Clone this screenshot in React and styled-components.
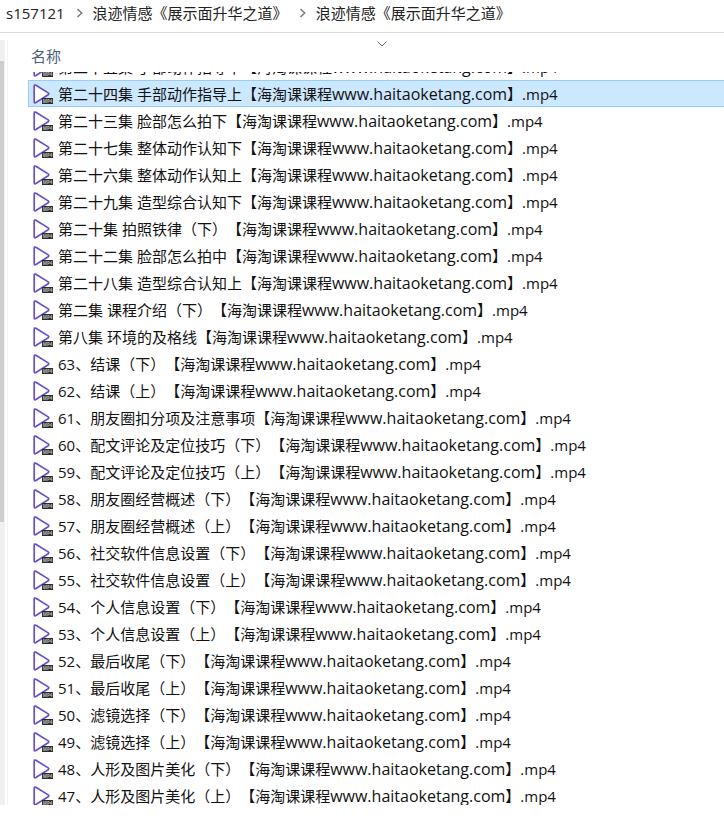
import React, { useState } from 'react'
import styled, { createGlobalStyle } from 'styled-components'

const PATH = ['s157121', '浪迹情感《展示面升华之道》', '浪迹情感《展示面升华之道》']

const FILES = [
  '第二十五集 手部动作指导下',
  '第二十四集 手部动作指导上',
  '第二十三集 脸部怎么拍下',
  '第二十七集 整体动作认知下',
  '第二十六集 整体动作认知上',
  '第二十九集 造型综合认知下',
  '第二十集 拍照铁律（下）',
  '第二十二集 脸部怎么拍中',
  '第二十八集 造型综合认知上',
  '第二集 课程介绍（下）',
  '第八集 环境的及格线',
  '63、结课（下）',
  '62、结课（上）',
  '61、朋友圈扣分项及注意事项',
  '60、配文评论及定位技巧（下）',
  '59、配文评论及定位技巧（上）',
  '58、朋友圈经营概述（下）',
  '57、朋友圈经营概述（上）',
  '56、社交软件信息设置（下）',
  '55、社交软件信息设置（上）',
  '54、个人信息设置（下）',
  '53、个人信息设置（上）',
  '52、最后收尾（下）',
  '51、最后收尾（上）',
  '50、滤镜选择（下）',
  '49、滤镜选择（上）',
  '48、人形及图片美化（下）',
  '47、人形及图片美化（上）'
]

const VideoIcon = () => (
  <FileIcon viewBox='0 0 20 20' aria-hidden='true'>
    <path
      d='M1.2 2.2 Q1.2 .4 2.9 1.3 L15.2 8.9 Q16.4 9.8 15.2 10.7 L2.9 18.5 Q1.2 19.4 1.2 17.6 Z'
      fill='#fff'
      stroke='#6a4fc8'
      strokeWidth='1.7'
      strokeLinejoin='round'
    />
    <rect x='9' y='14' width='11' height='6' fill='#2b2b2b' />
    <text x='14.5' y='18.6' textAnchor='middle' fontSize='4.5' fontWeight='700' fill='#bbb'>MP4</text>
  </FileIcon>
)

const Crumb = ({ label, first }) => (
  <CrumbItem>
    {!first &&
      <Separator viewBox='0 0 8 10' aria-hidden='true'>
        <path d='M1.5 1 L5.7 5 L1.5 9' fill='none' stroke='#777' strokeWidth='1.4' />
      </Separator>
    }
    <CrumbLink href='#'>{label}</CrumbLink>
  </CrumbItem>
)

export default function App () {
  const [selected, setSelected] = useState(1)
  return (
    <Window>
      <GlobalStyle />
      <Breadcrumbs aria-label='路径'>
        {PATH.map((label, i) => <Crumb key={i} label={label} first={i === 0} />)}
      </Breadcrumbs>
      <Body>
        <Track><Thumb /></Track>
        <Pane>
          <ColumnHeader type='button'>
            <SortArrow viewBox='0 0 10 6' aria-hidden='true'>
              <path d='M.5 .6 L5 5 L9.5 .6' fill='none' stroke='#666' />
            </SortArrow>
            <span>名称</span>
          </ColumnHeader>
          <Viewport>
            <FileList>
              {FILES.map((name, i) => (
                <li key={name}>
                  <FileRow type='button' $selected={i === selected} aria-pressed={i === selected} onClick={() => setSelected(i)}>
                    <VideoIcon />
                    <span>{name}【海淘课课程<Domain>www.haitaoketang.com</Domain>】.mp4</span>
                  </FileRow>
                </li>
              ))}
            </FileList>
          </Viewport>
        </Pane>
      </Body>
    </Window>
  )
}

const GlobalStyle = createGlobalStyle`
  * {
    box-sizing: border-box;
  }
  body {
    margin: 0;
    background: #fff;
    color: #111;
    font: 15px/20px "Open Sans", "Noto Sans CJK SC", sans-serif;
    text-spacing-trim: space-all;
  }
  button {
    border: 0;
    padding: 0;
    background: none;
    font: inherit;
    text-spacing-trim: inherit;
    text-align: left;
  }
`

const Window = styled.div`
  display: flex;
  flex-direction: column;
  height: 100vh;
  padding-bottom: 26px;
  overflow: hidden;
`

const Breadcrumbs = styled.nav`
  display: flex;
  flex: none;
  height: 33px;
  padding: 3px 6px;
  border-bottom: 1px solid #d9d9d9;
  white-space: nowrap;
`

const CrumbItem = styled.div`
  display: flex;
`

const CrumbLink = styled.a`
  color: #222;
  text-decoration: none;
`

const Separator = styled.svg`
  width: 8px;
  height: 10px;
  margin: 5px 9px 0 11px;
`

const Body = styled.main`
  display: flex;
  flex: 1;
  min-height: 0;
  margin-top: 7px;
`

const Track = styled.div`
  flex: none;
  width: 5px;
  padding-top: 21px;
  background: #f0f0f0;
`

const Thumb = styled.div`
  width: 4px;
  height: 62%;
  background: #cdcdcd;
`

const Pane = styled.section`
  display: flex;
  flex: 1;
  flex-direction: column;
  min-width: 0;
  margin-left: 2px;
  padding-left: 20px;
  border-left: 1px solid #f3f3f3;
`

/* the name column runs a little past the right edge of the window */
const ColumnHeader = styled.button`
  display: flex;
  flex: none;
  flex-direction: column;
  width: calc(100% + 12px);
  height: 32px;
  padding: 1px 3px 0;
  color: #4c607a;
  line-height: 18px;
`

const SortArrow = styled.svg`
  align-self: center;
  width: 10px;
  height: 6px;
`

const Viewport = styled.div`
  flex: 1;
  min-height: 0;
  overflow: hidden;
`

const FileList = styled.ul`
  margin: -19px 0 0;
  padding: 0;
  list-style: none;
`

const FileRow = styled.button`
  display: flex;
  align-items: center;
  gap: 5px;
  width: 100%;
  height: 27px;
  padding-left: 4px;
  border: 1px solid ${p => p.$selected ? '#99cdf2' : 'transparent'};
  border-right: 0;
  background: ${p => p.$selected ? '#cce8ff' : 'transparent'};
  color: #111;
  white-space: nowrap;
`

const Domain = styled.span`
  font-size: 16px;
`

const FileIcon = styled.svg`
  flex: none;
  width: 20px;
  height: 20px;
`
